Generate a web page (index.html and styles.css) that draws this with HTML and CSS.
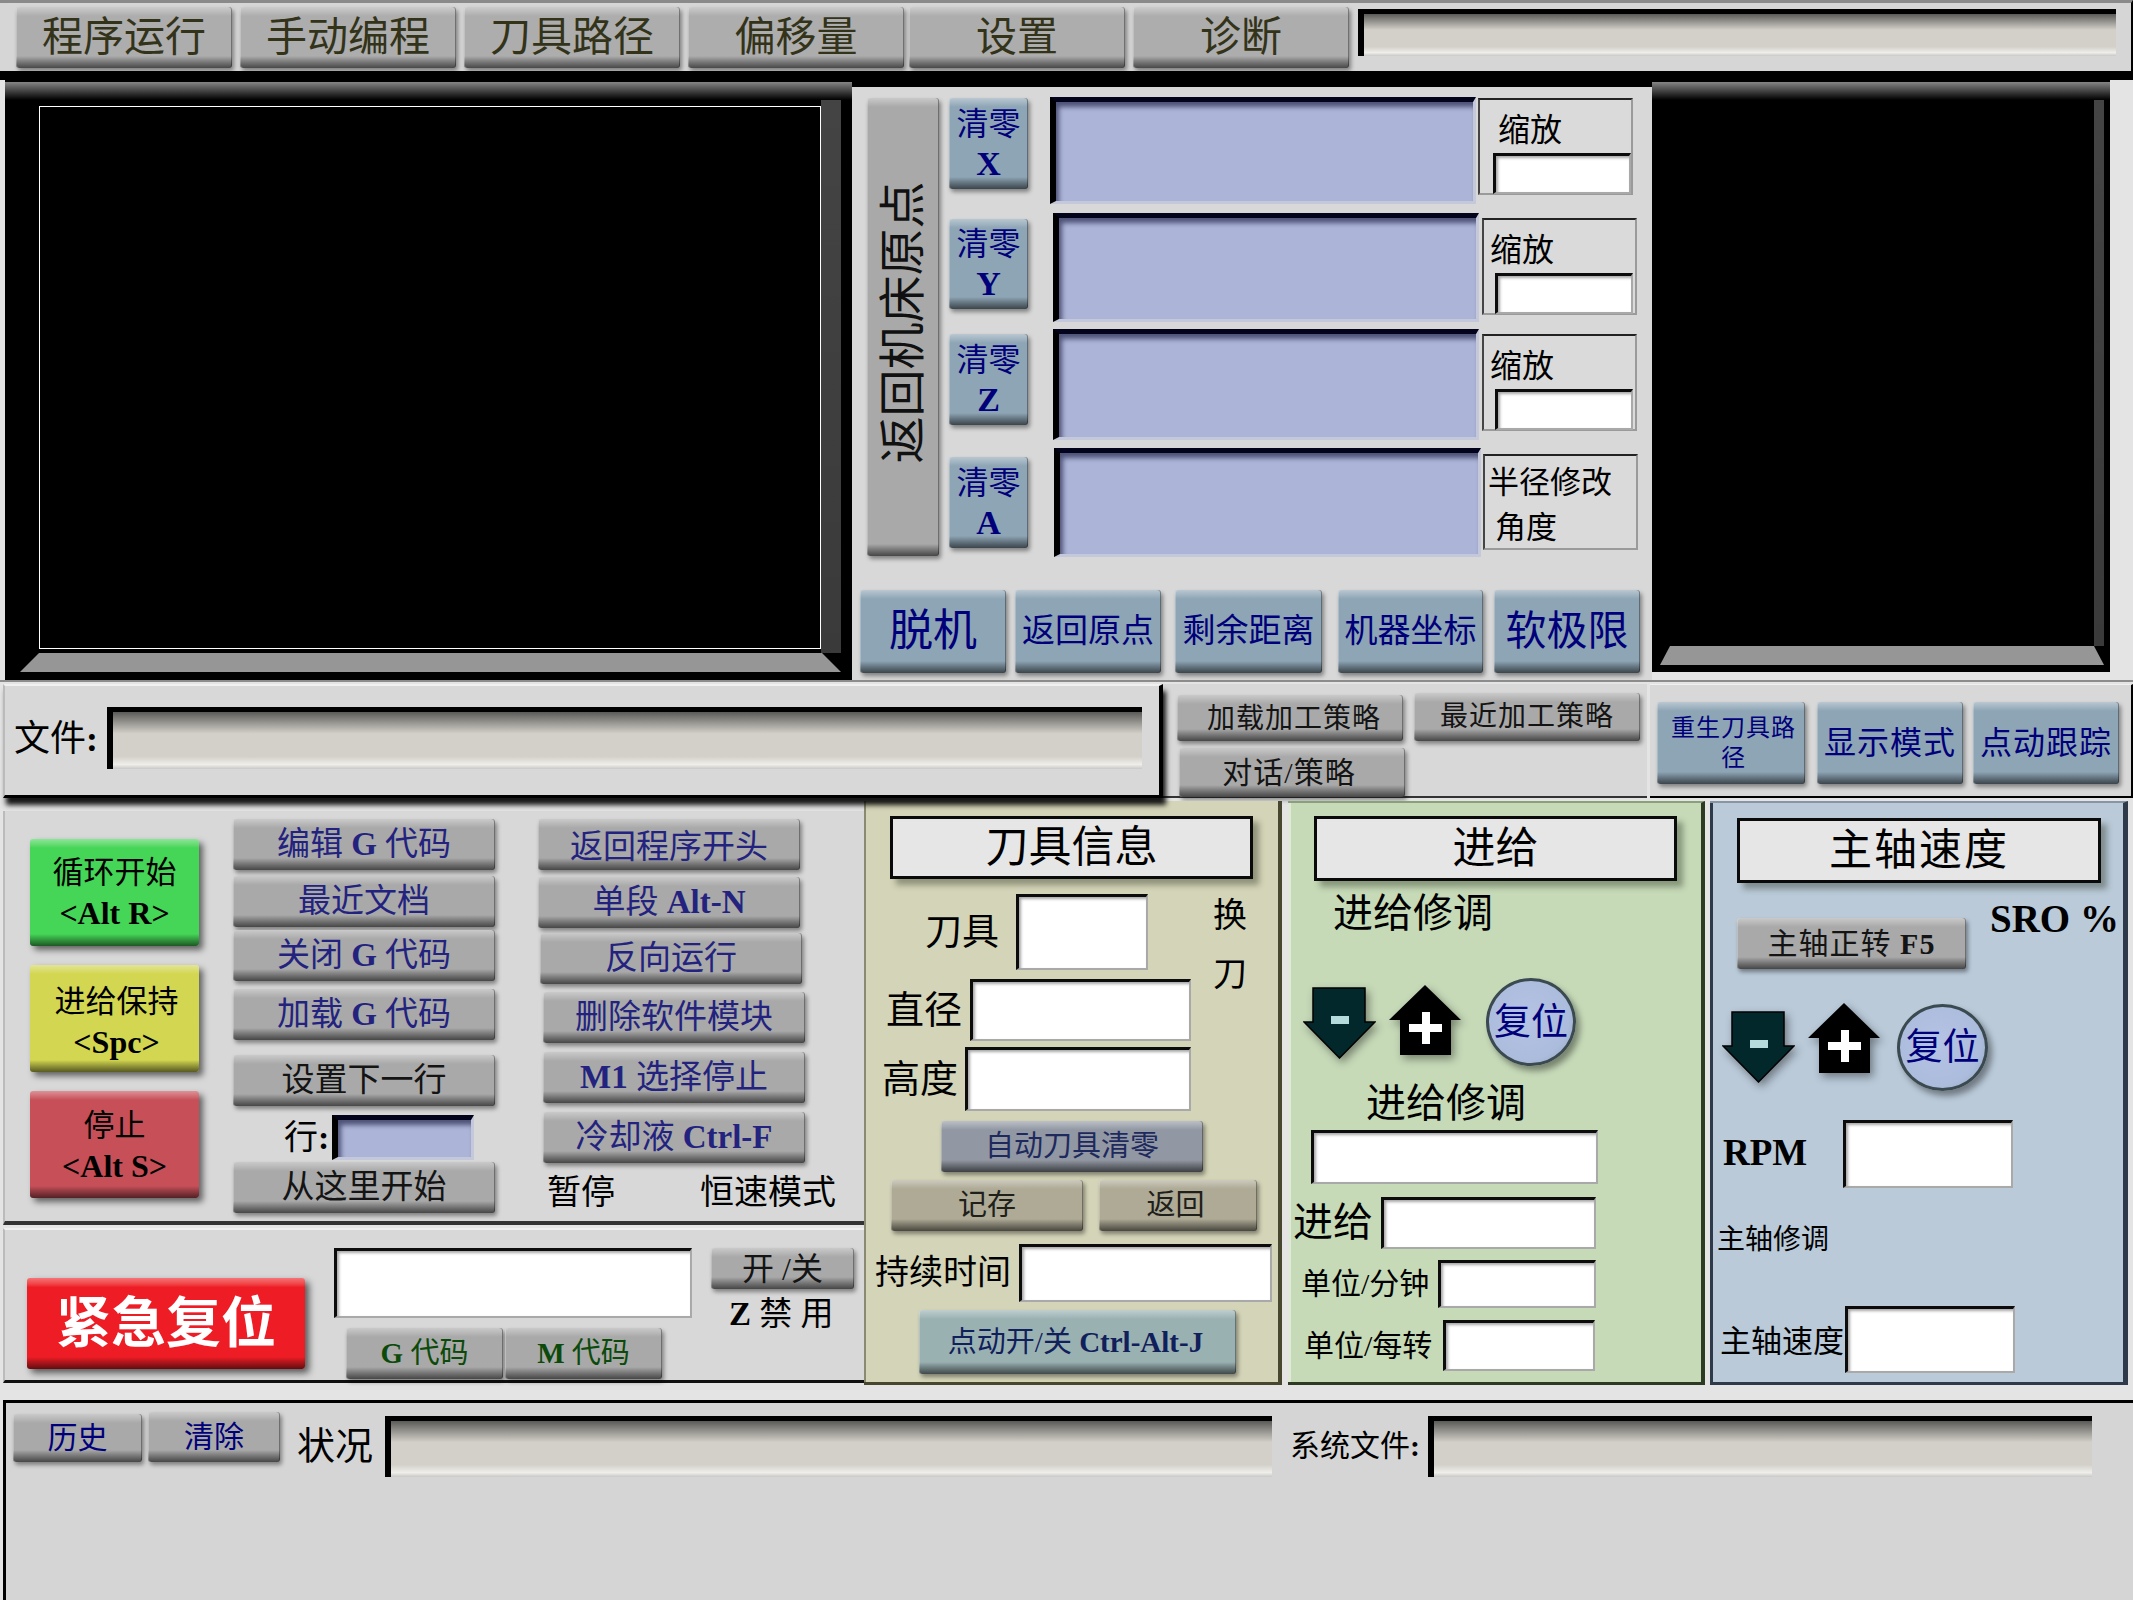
FILE: index.html
```html
<!DOCTYPE html>
<html lang="zh-CN">
<head>
<meta charset="utf-8">
<title>CNC 控制界面</title>
<link rel="stylesheet" href="styles.css">
</head>
<body>
<header class="topbar">
  <button class="btn gray tab"><span>程序运行</span></button>
  <button class="btn gray tab"><span>手动编程</span></button>
  <button class="btn gray tab"><span>刀具路径</span></button>
  <button class="btn gray tab"><span>偏移量</span></button>
  <button class="btn gray tab tab-tight"><span>设置</span></button>
  <button class="btn gray tab"><span>诊断</span></button>
  <div class="gfield topfield"></div>
</header>

<section class="work">
  <div class="view view-left"><div class="screen"></div></div>
  <div class="axes">
    <div class="axes-top">
      <button class="btn gray home"><span>返回机床原点</span></button>
      <div class="zero-col">
        <button class="btn blue zero z1"><span>清零<br><b>X</b></span></button>
        <button class="btn blue zero z2"><span>清零<br><b>Y</b></span></button>
        <button class="btn blue zero z3"><span>清零<br><b>Z</b></span></button>
        <button class="btn blue zero z4"><span>清零<br><b>A</b></span></button>
      </div>
      <div class="dro-col">
        <div class="dro d1"></div>
        <div class="dro d2"></div>
        <div class="dro d3"></div>
        <div class="dro d4"></div>
      </div>
      <div class="scale-col">
        <div class="scale s1"><span class="scale-label l1">缩放</span><div class="wf scale-in i1"></div></div>
        <div class="scale s2"><span class="scale-label">缩放</span><div class="wf scale-in"></div></div>
        <div class="scale s3"><span class="scale-label">缩放</span><div class="wf scale-in"></div></div>
        <div class="scale s4"><span class="rad1">半径修改</span><span class="rad2">角度</span></div>
      </div>
    </div>
    <div class="axes-bottom">
      <button class="btn blue ab a1 f44"><span>脱机</span></button>
      <button class="btn blue ab a2 f33"><span>返回原点</span></button>
      <button class="btn blue ab a3 f33"><span>剩余距离</span></button>
      <button class="btn blue ab a4 f33"><span>机器坐标</span></button>
      <button class="btn blue ab a5 f41"><span>软极限</span></button>
    </div>
  </div>
  <div class="view view-right"></div>
</section>

<section class="files">
  <div class="file-panel">
    <label class="file-label">文件<b>:</b></label>
    <div class="gfield file-field"></div>
  </div>
  <div class="strategy">
    <div class="strategy-row r1">
      <button class="btn gray dark sb sb1"><span>加载加工策略</span></button>
      <button class="btn gray dark sb sb2"><span>最近加工策略</span></button>
    </div>
    <button class="btn gray dark sb sb3"><span>对话/策略</span></button>
  </div>
  <div class="modes">
    <button class="btn blue mode m1 f24"><span>重生刀具路径</span></button>
    <button class="btn blue mode m2 f32"><span>显示模式</span></button>
    <button class="btn blue mode m3 f32"><span>点动跟踪</span></button>
  </div>
</section>

<section class="ops">
  <div class="ops-left">
    <div class="ctrl">
      <div class="col-a">
        <button class="btn cycle green"><span>循环开始<br><b>&lt;Alt R&gt;</b></span></button>
        <button class="btn cycle yellow"><span>进给保持<br><b>&lt;Spc&gt;</b></span></button>
        <button class="btn cycle red"><span>停止<br><b>&lt;Alt S&gt;</b></span></button>
      </div>
      <div class="col-b">
        <button class="btn gray prog"><span>编辑 <b>G</b> 代码</span></button>
        <button class="btn gray prog mt6"><span>最近文档</span></button>
        <button class="btn gray prog mt3"><span>关闭 <b>G</b> 代码</span></button>
        <button class="btn gray prog mt8"><span>加载 <b>G</b> 代码</span></button>
        <button class="btn gray prog dark mt15"><span>设置下一行</span></button>
        <div class="line-row"><span class="f34">行<b>:</b></span><div class="dro line-dro"></div></div>
        <button class="btn gray prog dark mt2"><span>从这里开始</span></button>
      </div>
      <div class="col-c">
        <button class="btn gray prog prog-low"><span>返回程序开头</span></button>
        <button class="btn gray prog mt7"><span>单段 <b>Alt-N</b></span></button>
        <button class="btn gray prog mt5 ml2"><span>反向运行</span></button>
        <button class="btn gray prog mt8 ml5"><span>删除软件模块</span></button>
        <button class="btn gray prog mt9 ml5"><span><b>M1</b> 选择停止</span></button>
        <button class="btn gray prog mt9 ml5"><span>冷却液 <b>Ctrl-F</b></span></button>
        <div class="state-row"><span>暂停</span><span>恒速模式</span></div>
      </div>
    </div>
    <div class="mdi">
      <button class="btn estop"><span>紧急复位</span></button>
      <div class="mdi-mid">
        <div class="wf mdi-field"></div>
        <div class="code-row">
          <button class="btn gray code"><span><b>G</b> 代码</span></button>
          <button class="btn gray code"><span><b>M</b> 代码</span></button>
        </div>
      </div>
      <div class="mdi-right">
        <button class="btn gray dark onoff"><span>开 /关</span></button>
        <span class="zlock"><b>Z</b> 禁 用</span>
      </div>
    </div>
  </div>

  <div class="panel tool">
    <h2 class="title">刀具信息</h2>
    <div class="row mt15">
      <span class="lab37 ml61">刀具</span>
      <div class="wf tf-a"></div>
      <div class="toolchange"><span>换</span><span>刀</span></div>
    </div>
    <div class="row mt9"><span class="lab38 ml22">直径</span><div class="wf tf-b"></div></div>
    <div class="row mt6"><span class="lab38 ml18">高度</span><div class="wf tf-c"></div></div>
    <button class="btn steel autozero"><span>自动刀具清零</span></button>
    <div class="row mt8">
      <button class="btn khaki save"><span>记存</span></button>
      <button class="btn khaki back"><span>返回</span></button>
    </div>
    <div class="row mt13"><span class="lab34 ml11">持续时间</span><div class="wf tf-d"></div></div>
    <button class="btn teal jog"><span>点动开/关 <b>Ctrl-Alt-J</b></span></button>
  </div>

  <div class="panel feed">
    <h2 class="title t-feed">进给</h2>
    <p class="lab40 ml45 mt13">进给修调</p>
    <div class="ovr ovr-feed">
      <svg class="arrow dn" viewBox="0 0 73 72"><polygon points="10,1 62,1 62,35 72,35 36.5,71 1,35 10,35" fill="#03282b" stroke="#000" stroke-width="1.5"/><rect x="28" y="29" width="18" height="8" fill="#b6dbdc"/></svg>
      <svg class="arrow up" viewBox="0 0 74 72"><polygon points="37,1 73,36 63,36 63,71 12,71 12,36 1,36" fill="#000"/><path d="M21 40h33v8H21zM34 28h8v32h-8z" fill="#fff"/></svg>
      <button class="reset"><span>复位</span></button>
    </div>
    <p class="lab40 ml78 mt18">进给修调</p>
    <div class="wf ff-a"></div>
    <div class="row mt13"><span class="lab40 ml5">进给</span><div class="wf ff-b"></div></div>
    <div class="row mt11"><span class="lab30 ml13">单位/分钟</span><div class="wf ff-c"></div></div>
    <div class="row mt12"><span class="lab30 ml16">单位/每转</span><div class="wf ff-d"></div></div>
  </div>

  <div class="panel spindle">
    <h2 class="title t-sp">主轴速度</h2>
    <div class="sp-top">
      <button class="btn gray dark spin-cw"><span>主轴正转 <b>F5</b></span></button>
      <b class="sro">SRO %</b>
    </div>
    <div class="ovr ovr-sp">
      <svg class="arrow dn" viewBox="0 0 73 72"><polygon points="10,1 62,1 62,35 72,35 36.5,71 1,35 10,35" fill="#03282b" stroke="#000" stroke-width="1.5"/><rect x="28" y="29" width="18" height="8" fill="#b6dbdc"/></svg>
      <svg class="arrow up" viewBox="0 0 74 72"><polygon points="37,1 73,36 63,36 63,71 12,71 12,36 1,36" fill="#000"/><path d="M21 40h33v8H21zM34 28h8v32h-8z" fill="#fff"/></svg>
      <button class="reset"><span>复位</span></button>
    </div>
    <div class="row rpm-row"><b class="rpm">RPM</b><div class="wf sf-a"></div></div>
    <p class="sp-ovr">主轴修调</p>
    <div class="row sp-speed"><span class="lab31">主轴速度</span><div class="wf sf-b"></div></div>
  </div>
</section>

<section class="status">
  <button class="btn gray hist"><span>历史</span></button>
  <button class="btn gray clear"><span>清除</span></button>
  <span class="stat-label">状况</span>
  <div class="gfield stat-field"></div>
  <span class="sys-label">系统文件<b>:</b></span>
  <div class="gfield sys-field"></div>
</section>
</body>
</html>
```

FILE: styles.css
```css
* { box-sizing: border-box; }

html, body { margin: 0; padding: 0; }

body {
  width: 2133px;
  height: 1600px;
  overflow: hidden;
  background: #e4e4e4;
  color: #000;
  font-family: "Liberation Serif", "Noto Sans CJK SC", serif;
  font-size: 32px;
  line-height: 1;
}

p, h2 { margin: 0; font-weight: 400; }

/* ---------- shared controls ---------- */
.btn {
  --c: #a9a9a9;
  display: flex;
  align-items: center;
  justify-content: center;
  flex: none;
  padding: 0;
  border: 0;
  border-radius: 3px;
  font: inherit;
  color: #1f1f78;
  text-align: center;
  background: linear-gradient(
    color-mix(in srgb, var(--c), #fff 38%) 0,
    var(--c) 9px,
    var(--c) calc(100% - 12px),
    color-mix(in srgb, var(--c), #000 58%) 100%);
  box-shadow: inset 1px 0 0 rgba(255,255,255,.25), inset -1px 0 0 rgba(0,0,0,.35), 2px 3px 4px rgba(0,0,0,.4);
}
.gray  { --c: #a9a9a9; }
.blue  { --c: #8ea5b5; color: #00007a; }
.dark  { color: #141414; }
.steel { --c: #9298a3; color: #1e2a5e; }
.khaki { --c: #aeaa96; color: #20201a; }
.teal  { --c: #9ab1b2; color: #10205a; }

.wf {
  flex: none;
  background: #fff;
  border-top: 3px solid #0c0c0c;
  border-left: 3px solid #0c0c0c;
  border-right: 2px solid #a9a9a9;
  border-bottom: 2px solid #a9a9a9;
  box-shadow: inset 2px 2px 3px rgba(0,0,0,.35);
}

.gfield {
  flex: none;
  background: linear-gradient(#5a5a58 0, #9c9a94 20%, #d3d0ca 38%, #d3d0ca 78%, #efeee9 92%, #c8c8c8 100%);
  border-top: 5px solid #000;
  border-left: 6px solid #000;
}

.dro {
  background: #acb5d8;
  border-top: 5px solid #03031c;
  border-left: 6px solid #000;
  border-right: 3px solid #c3c8da;
  border-bottom: 3px solid #c3c8da;
  box-shadow: inset 3px 5px 5px rgba(0,0,40,.55);
}

.row { display: flex; align-items: center; flex: none; }

.f24 { font-size: 24px; letter-spacing: 1px; line-height: 1.27; }
.f32 { font-size: 32px; }
.f33 { font-size: 33px; }
.f34 { font-size: 34px; }
.f41 { font-size: 41px; }
.f44 { font-size: 44px; }

.mt2 { margin-top: 2px; }
.mt3 { margin-top: 3px; }
.mt5 { margin-top: 5px; }
.mt6 { margin-top: 6px; }
.mt7 { margin-top: 7px; }
.mt8 { margin-top: 8px; }
.mt9 { margin-top: 9px; }
.mt11 { margin-top: 11px; }
.mt12 { margin-top: 12px; }
.mt13 { margin-top: 13px; }
.mt15 { margin-top: 15px; }
.mt18 { margin-top: 18px; }
.ml2 { margin-left: 2px; }
.ml5 { margin-left: 5px; }
.ml11 { margin-left: 11px; }
.ml13 { margin-left: 13px; }
.ml16 { margin-left: 16px; }
.ml18 { margin-left: 18px; }
.ml22 { margin-left: 22px; }
.ml45 { margin-left: 45px; }
.ml61 { margin-left: 61px; }
.ml78 { margin-left: 78px; }

.lab30 { font-size: 30px; }
.lab31 { font-size: 31px; padding-top: 4px; }
.lab34 { font-size: 34px; }
.lab37 { font-size: 37px; }
.lab38 { font-size: 38px; }
.lab40 { font-size: 40px; }

/* ---------- top bar ---------- */
.topbar {
  display: flex;
  align-items: flex-start;
  gap: 8px;
  height: 80px;
  padding: 7px 2px 0 16px;
  background: #d6d6d6;
  border-top: 3px solid #8a8a8a;
  border-right: 2px solid #000;
  border-bottom: 9px solid #000;
}
.tab {
  width: 216px;
  height: 61px;
  margin-top: -3px;
  --c: #adadad;
  font-size: 41px;
  color: #33331a;
}
.tab-tight { margin-left: -3px; }
.topfield {
  width: 758px;
  height: 47px;
  margin-left: 1px;
  margin-top: -1px;
}

/* ---------- work row ---------- */
.work {
  display: flex;
  align-items: flex-start;
  height: 602px;
  padding-left: 5px;
  border-bottom: 2px solid #8c8c8c;
}
.view { position: relative; flex: none; background: #000; }
.view::before {
  content: "";
  position: absolute;
  top: 2px; left: 0; right: 0;
  height: 18px;
  background: linear-gradient(#858585, #000);
}
.view::after {
  content: "";
  position: absolute;
}
.view-left {
  width: 847px;
  height: 600px;
  padding: 26px 0 0 34px;
  background:
    linear-gradient(#444, #3a3a3a) 816px 20px / 20px 553px no-repeat,
    #000;
}
.view-left::after {
  left: 15px; top: 573px;
  width: 821px; height: 19px;
  background: #969696;
  clip-path: polygon(19px 0, 802px 0, 821px 100%, 0 100%);
}
.screen {
  position: relative;
  z-index: 1;
  width: 782px;
  height: 543px;
  background: #000;
  border: 1px solid #fff;
}
.view-right {
  width: 458px;
  height: 592px;
  background:
    linear-gradient(#444, #3a3a3a) 442px 20px / 10px 546px no-repeat,
    #000;
}
.view-right::after {
  left: 8px; top: 566px;
  width: 444px; height: 19px;
  background: #969696;
  clip-path: polygon(10px 0, 434px 0, 444px 100%, 0 100%);
}

.axes {
  flex: none;
  width: 800px;
  height: 600px;
  background: #d8d8d8;
  border-top: 7px solid #000;
}
.axes-top { display: flex; height: 498px; }
.home {
  position: relative;
  width: 72px;
  height: 458px;
  margin: 11px 0 0 15px;
  --c: #a9a9a9;
  color: #111;
}
.home span {
  display: block;
  white-space: nowrap;
  font-size: 47px;
  transform: rotate(-90deg) translateX(5px);
}
.zero-col { width: 79px; margin-left: 10px; padding-top: 11px; flex: none; }
.zero { width: 79px; font-size: 32px; line-height: 40px; }
.zero b { font-size: 34px; }
.z1 { height: 91px; }
.z2 { height: 90px; margin-top: 30px; }
.z3 { height: 91px; margin-top: 25px; }
.z4 { height: 91px; margin-top: 32px; }

.dro-col { width: 428px; margin-left: 22px; padding-top: 10px; flex: none; }
.d1 { width: 426px; height: 107px; }
.d2 { width: 426px; height: 109px; margin: 9px 0 0 3px; }
.d3 { width: 426px; height: 111px; margin: 7px 0 0 3px; }
.d4 { width: 427px; height: 109px; margin: 8px 0 0 4px; }

.scale-col { width: 160px; padding-top: 11px; flex: none; }
.scale {
  display: flex;
  flex-direction: column;
  align-items: flex-start;
  width: 155px;
  height: 97px;
  background: #dadada;
  border-top: 2px solid #222;
  border-left: 2px solid #444;
  border-right: 2px solid #9a9a9a;
  border-bottom: 2px solid #9a9a9a;
}
.s2 { margin: 23px 0 0 4px; }
.s3 { margin: 19px 0 0 4px; }
.s4 { margin: 23px 0 0 5px; height: 96px; font-size: 31px; }
.scale-label { font-size: 32px; margin: 14px 0 0 6px; }
.l1 { margin-left: 18px; }
.scale-in { width: 138px; height: 41px; margin: auto -2px -1px 13px; }
.s2 .scale-in, .s3 .scale-in { margin-left: 11px; }
.rad1 { margin: 11px 0 0 3px; white-space: nowrap; }
.rad2 { margin: 14px 0 0 10px; }

.axes-bottom { display: flex; align-items: flex-start; padding-top: 5px; }
.ab { height: 83px; width: 146px; }
.a1 { margin-left: 8px; }
.a2 { margin-left: 9px; }
.a3 { margin-left: 14px; width: 147px; }
.a4 { margin-left: 16px; width: 145px; }
.a5 { margin-left: 11px; }

/* ---------- files row ---------- */
.files {
  display: flex;
  align-items: flex-start;
  height: 119px;
  padding-left: 3px;
}
.file-panel {
  position: relative;
  z-index: 1;
  display: flex;
  align-items: flex-start;
  flex: none;
  width: 1160px;
  height: 114px;
  margin-top: 2px;
  background: #d8d8d8;
  border-top: 2px solid #f0f0f0;
  border-left: 2px solid #bbb;
  border-bottom: 3px solid #000;
  border-right: 4px solid #000;
  box-shadow: 3px 7px 5px rgba(0,0,0,.9);
}
.file-label { font-size: 36px; margin: 35px 0 0 9px; white-space: nowrap; }
.file-field { width: 1035px; height: 62px; margin: 21px 0 0 9px; }

.strategy {
  flex: none;
  width: 484px;
  height: 114px;
  margin-top: 2px;
  padding: 9px 0 0 14px;
  background: #d8d8d8;
  border-bottom: 2px solid #333;
}
.strategy-row { display: flex; align-items: flex-end; }
.sb { height: 46px; font-size: 28px; letter-spacing: 1px; }
.sb1 { width: 226px; padding-left: 8px; padding-top: 2px; }
.sb2 { width: 226px; height: 48px; margin-left: 11px; }
.sb3 { width: 226px; height: 49px; margin: 7px 0 0 2px; font-size: 30px; padding-right: 6px; }

.modes {
  display: flex;
  flex: none;
  gap: 12px;
  width: 483px;
  height: 114px;
  margin: 2px 0 0 3px;
  padding: 17px 0 0 7px;
  background: #d8d8d8;
  border-right: 2px solid #000;
  border-bottom: 2px solid #000;
  border-top: 1px solid #f0f0f0;
}
.mode { height: 82px; letter-spacing: 1px; }
.m1 { width: 148px; padding-left: 5px; }
.m1 span { display: block; width: 126px; }
.m2, .m3 { width: 146px; }
.m3 { margin-left: -2px; }

/* ---------- operations row ---------- */
.ops { display: flex; align-items: flex-start; height: 584px; }
.ops-left { flex: none; width: 864px; margin-left: 3px; margin-right: -3px; }
.ctrl {
  display: flex;
  height: 414px;
  margin-top: 10px;
  padding-left: 27px;
  background: #d8d8d8;
  border-left: 2px solid #bbb;
  border-bottom: 4px solid #333;
  width: 861px;
}
.col-a { flex: none; width: 169px; padding-top: 28px; margin-left: -2px; }
.cycle {
  width: 169px;
  height: 107px;
  margin-bottom: 19px;
  font-size: 31px;
  line-height: 41px;
  color: #000;
  box-shadow: 4px 4px 6px rgba(0,0,0,.55);
}
.cycle b { font-size: 32px; }
.green  { --c: #45d557; }
.yellow { --c: #d2d650; padding: 6px 0 0 4px; }
.red    { --c: #c64f58; padding-top: 2px; }

.col-b { flex: none; width: 262px; margin-left: 34px; padding-top: 8px; }
.col-c { flex: none; width: 268px; margin-left: 43px; padding-top: 8px; }
.prog { width: 262px; height: 51px; font-size: 33px; color: #23237f; }
.prog.dark { color: #141414; }
.prog-low { padding-top: 5px; }
.line-row { display: flex; align-items: center; margin-top: 9px; height: 45px; padding-left: 51px; }
.line-dro { flex: none; width: 142px; height: 45px; margin-left: 3px; }
.state-row { display: flex; margin-top: 13px; font-size: 34px; white-space: nowrap; }
.state-row span:first-child { margin-left: 9px; }
.state-row span:last-child { margin-left: 85px; }

.mdi {
  display: flex;
  align-items: flex-start;
  width: 861px;
  height: 155px;
  margin-top: 3px;
  background: #d8d8d8;
  border-left: 2px solid #bbb;
  border-top: 2px solid #efefef;
  border-bottom: 3px solid #111;
}
.estop {
  --c: #ee1c25;
  width: 278px;
  height: 91px;
  margin: 48px 0 0 22px;
  font-size: 55px;
  font-weight: 700;
  color: #fff;
  box-shadow: 4px 4px 7px rgba(0,0,0,.6);
}
.mdi-mid { flex: none; margin-left: 29px; padding-top: 18px; }
.mdi-field { width: 358px; height: 70px; }
.code-row { display: flex; margin: 10px 0 0 12px; gap: 2px; }
.code { width: 157px; height: 51px; font-size: 29px; color: #0c4a0c; }
.mdi-right { flex: none; margin-left: 19px; padding-top: 18px; }
.onoff { width: 143px; height: 41px; font-size: 32px; }
.zlock { display: block; margin: 9px 0 0 18px; font-size: 33px; white-space: nowrap; }

.panel { flex: none; height: 584px; }
.title {
  display: flex;
  align-items: center;
  justify-content: center;
  width: 363px;
  height: 63px;
  margin: 15px 0 0 26px;
  background: #e6e6e6;
  border: 3px solid #0a0a0a;
  box-shadow: 6px 6px 6px rgba(40,50,30,.4);
  font-size: 43px;
}
.t-feed { height: 65px; margin-top: 13px; }
.t-sp { height: 65px; width: 364px; margin-left: 27px; letter-spacing: 2px; }

.tool {
  width: 418px;
  background: #d4d4b8;
  border-right: 4px solid #47472f;
  border-bottom: 3px solid #47472f;
  box-shadow: inset 2px 0 0 #8a8a72;
}
.tf-a { width: 132px; height: 76px; margin-left: 17px; }
.toolchange {
  display: flex;
  flex-direction: column;
  align-self: flex-start;
  gap: 25px;
  height: 76px;
  margin-left: 65px;
  padding-top: 5px;
  font-size: 34px;
}
.tf-b { width: 221px; height: 62px; margin-left: 8px; }
.tf-c { width: 226px; height: 64px; margin-left: 7px; }
.autozero { width: 262px; height: 51px; margin: 10px 0 0 77px; font-size: 29px; }
.save { width: 192px; height: 51px; margin-left: 27px; font-size: 29px; }
.back { width: 158px; height: 51px; margin-left: 16px; font-size: 29px; padding-right: 5px; }
.tf-d { width: 253px; height: 58px; margin-left: 8px; }
.jog { width: 317px; height: 64px; margin: 8px 0 0 55px; font-size: 29px; padding-right: 4px; }

.feed {
  width: 417px;
  margin-left: 6px;
  background: #c6dab8;
  border-top: 2px solid #8aa07c;
  border-right: 4px solid #2d3b22;
  border-bottom: 3px solid #2d3b22;
  box-shadow: inset 3px 0 0 #e0e8d8;
}
.ovr { position: relative; display: flex; align-items: flex-start; }
.arrow { flex: none; filter: drop-shadow(3px 4px 4px rgba(0,0,0,.4)); }
.dn { width: 73px; height: 72px; }
.up { width: 74px; height: 72px; }
.reset {
  flex: none;
  display: flex;
  align-items: center;
  justify-content: center;
  padding: 0;
  width: 90px;
  height: 88px;
  border: 3px solid #3a4a50;
  border-radius: 50%;
  font: inherit;
  font-size: 37px;
  color: #00007a;
  background: radial-gradient(circle at 45% 45%, #b5c3e4 0, #acbcdc 65%, #8f9fb8 100%);
  box-shadow: 4px 5px 6px rgba(0,0,0,.4);
  white-space: nowrap;
}
.ovr-feed { height: 88px; margin-top: 44px; padding-left: 15px; }
.ovr-feed .dn { margin-top: 9px; }
.ovr-feed .up { margin: 6px 0 0 12px; }
.ovr-feed .reset { margin-left: 24px; }
.ff-a { width: 287px; height: 54px; margin: 6px 0 0 23px; }
.ff-b { width: 215px; height: 52px; margin-left: 8px; }
.ff-c { width: 158px; height: 48px; margin-left: 9px; }
.ff-d { width: 152px; height: 51px; margin-left: 11px; }

.spindle {
  width: 418px;
  margin-left: 5px;
  background: #bacad9;
  border-top: 2px solid #8795a5;
  border-right: 5px solid #2e3a4a;
  border-bottom: 3px solid #2e3a4a;
  box-shadow: inset 3px 0 0 #2e3a4a;
}
.sp-top { display: flex; align-items: flex-start; margin-top: 18px; }
.spin-cw { width: 229px; height: 51px; margin: 17px 0 0 27px; font-size: 30px; letter-spacing: 1px; }
.sro { margin: -2px 0 0 24px; font-size: 39px; white-space: nowrap; }
.ovr-sp { height: 89px; margin-top: 33px; padding-left: 12px; }
.ovr-sp .dn { margin-top: 9px; }
.ovr-sp .up { margin-left: 12px; }
.ovr-sp .reset { width: 91px; height: 87px; margin: 2px 0 0 16px; }
.rpm-row { margin-top: 29px; }
.rpm { margin: -3px 0 0 13px; font-size: 37px; }
.sf-a { width: 170px; height: 68px; margin-left: 36px; }
.sp-ovr { margin: 38px 0 0 7px; font-size: 28px; white-space: nowrap; }
.sp-speed { margin-top: 52px; padding-left: 10px; }
.sf-b { width: 170px; height: 67px; margin-left: 1px; }

/* ---------- status ---------- */
.status {
  display: flex;
  align-items: flex-start;
  height: 200px;
  margin: 15px 0 0 3px;
  padding-left: 7px;
  background: #d5d5d5;
  border-top: 3px solid #000;
  border-left: 3px solid #000;
}
.hist { width: 129px; height: 48px; margin-top: 11px; font-size: 30px; color: #00007a; }
.clear { width: 132px; height: 50px; margin: 9px 0 0 6px; font-size: 30px; color: #00007a; }
.stat-label { margin: 24px 0 0 17px; font-size: 38px; white-space: nowrap; }
.stat-field { width: 887px; height: 61px; margin: 13px 0 0 12px; }
.sys-label { margin: 28px 0 0 18px; font-size: 30px; white-space: nowrap; }
.sys-field { width: 664px; height: 61px; margin: 13px 0 0 8px; }
```
